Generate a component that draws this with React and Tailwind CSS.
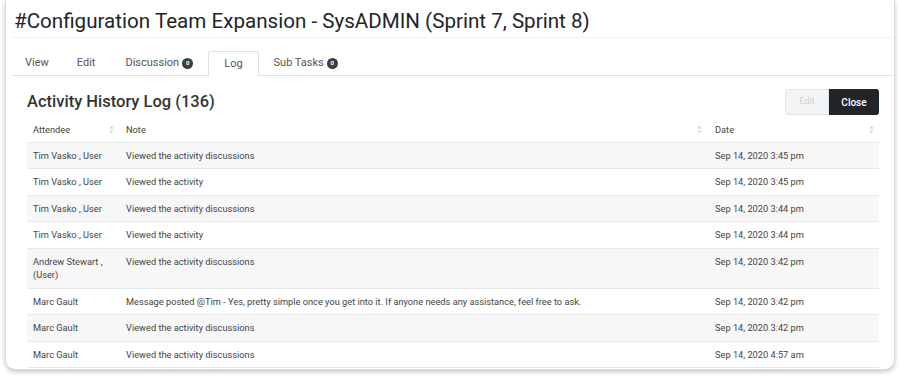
import React from "react";

const rows = [
  ["Tim Vasko , User", "Viewed the activity discussions", "Sep 14, 2020 3:45 pm"],
  ["Tim Vasko , User", "Viewed the activity", "Sep 14, 2020 3:45 pm"],
  ["Tim Vasko , User", "Viewed the activity discussions", "Sep 14, 2020 3:44 pm"],
  ["Tim Vasko , User", "Viewed the activity", "Sep 14, 2020 3:44 pm"],
  ["Andrew Stewart , (User)", "Viewed the activity discussions", "Sep 14, 2020 3:42 pm"],
  ["Marc Gault", "Message posted @Tim - Yes, pretty simple once you get into it. If anyone needs any assistance, feel free to ask.", "Sep 14, 2020 3:42 pm"],
  ["Marc Gault", "Viewed the activity discussions", "Sep 14, 2020 3:42 pm"],
  ["Marc Gault", "Viewed the activity discussions", "Sep 14, 2020 4:57 am"],
];

function SortIcon() {
  return (
    <svg width="5" height="9" viewBox="0 0 5 9" className="shrink-0">
      <path d="M2.5 0.5 L4.5 3.5 L0.5 3.5 Z" fill="#d6d6d6" />
      <path d="M2.5 8.5 L4.5 5.5 L0.5 5.5 Z" fill="#d6d6d6" />
    </svg>
  );
}

function Badge() {
  return (
    <span className="ml-[3px] inline-flex h-[11px] w-[11px] items-center justify-center rounded-full bg-[#3d3d3d] text-[6px] font-bold leading-none text-white">
      0
    </span>
  );
}

export default function App() {
  return (
    <div className="h-[379px] w-[900px] bg-white px-[5px] font-['Roboto',sans-serif]">
      <div className="h-[370px] overflow-hidden rounded-b-[10px] border border-t-0 border-[#dcdcdc] bg-white pl-[6px] pr-[1px] shadow-[0_2px_4px_rgba(0,0,0,0.22)]">
        <h1 className="h-[38px] border-b border-[#f0f0f0] pl-[2px] pt-[9px] text-[20.6px] font-normal leading-[24px] text-[#212529]">
          #Configuration Team Expansion - SysADMIN (Sprint 7, Sprint 8)
        </h1>
        <div className="mt-[13px] flex h-[25px] items-stretch border-b border-[#dee2e6] text-[11px] text-[#555]">
          <div className="flex items-center px-[13px]">View</div>
          <div className="flex items-center px-[15px]">Edit</div>
          <div className="flex items-center px-[15px]">
            Discussion
            <Badge />
          </div>
          <div className="-mb-px flex items-center rounded-t-[3px] border border-b-0 border-[#dee2e6] bg-white px-[15px]">
            Log
          </div>
          <div className="flex items-center pl-[15px] pr-[16px]">
            Sub Tasks
            <Badge />
          </div>
        </div>
        <div className="pl-[15px] pr-[14px]">
          <div className="mt-[13px] flex h-[26px] items-center justify-between">
            <h2 className="text-[16.5px] font-medium leading-[20px] text-[#333]">Activity History Log (136)</h2>
            <div className="flex h-[26px]">
              <button className="w-[44px] rounded-l-[3px] border border-[#e1e4e7] bg-[#f3f4f5] text-[9px] text-[#d0d0d0]">
                Edit
              </button>
              <button className="w-[50px] rounded-r-[3px] bg-[#212529] text-[10px] font-medium text-white">
                Close
              </button>
            </div>
          </div>
          <table className="mt-[3px] w-full table-fixed border-collapse text-[9.25px] leading-[13.5px] text-[#444]">
            <colgroup>
              <col className="w-[93px]" />
              <col />
              <col className="w-[171px]" />
            </colgroup>
            <thead>
              <tr className="h-[24px] border-b border-[#e8e8e8]">
                <th className="pl-[6px] pr-[6px] text-left font-normal">
                  <div className="flex items-center justify-between">
                    <span>Attendee</span>
                    <SortIcon />
                  </div>
                </th>
                <th className="pl-[6px] pr-[6px] text-left font-normal">
                  <div className="flex items-center justify-between">
                    <span>Note</span>
                    <SortIcon />
                  </div>
                </th>
                <th className="pl-[7px] pr-[5px] text-left font-normal">
                  <div className="flex items-center justify-between">
                    <span>Date</span>
                    <SortIcon />
                  </div>
                </th>
              </tr>
            </thead>
            <tbody>
              {rows.map((r, i) => (
                <tr key={i} className={`border-b border-[#e8e8e8] ${i % 2 === 0 ? "bg-[#f7f7f7]" : "bg-white"}`}>
                  <td className="py-[6px] pl-[6px] pr-[12px] align-top">{r[0]}</td>
                  <td className="py-[6px] pl-[6px] pr-[6px] align-top">{r[1]}</td>
                  <td className="py-[6px] pl-[7px] pr-[6px] align-top">{r[2]}</td>
                </tr>
              ))}
            </tbody>
          </table>
        </div>
      </div>
    </div>
  );
}
